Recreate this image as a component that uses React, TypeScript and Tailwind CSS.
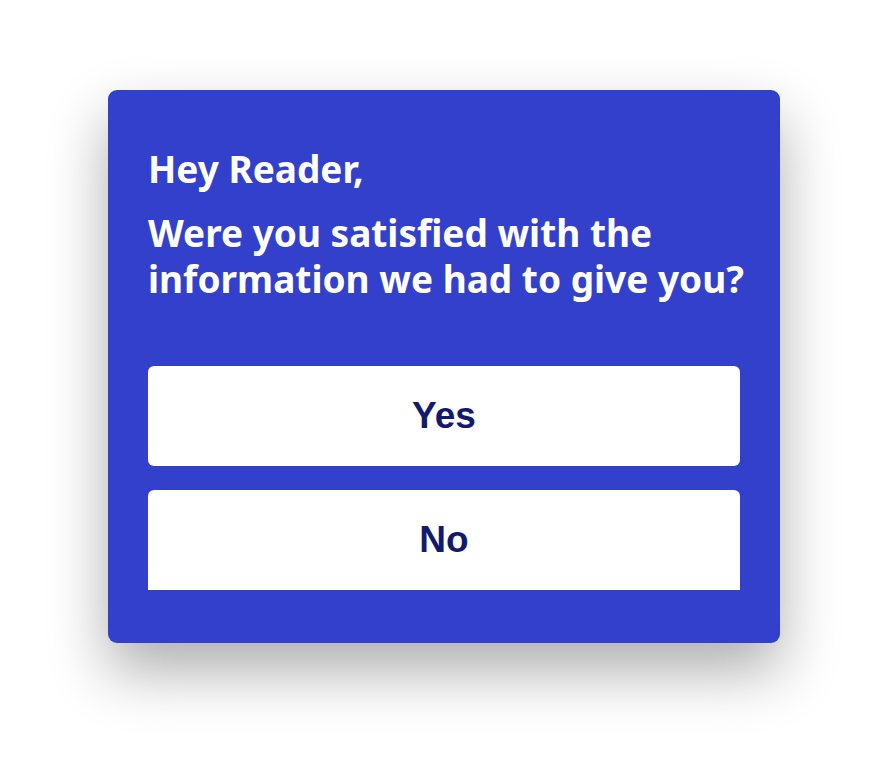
export default function App() {
  return (
    <div className="min-h-[774px] w-full bg-white flex justify-center pt-[90px]">
      <div className="w-[672px] h-[553px] rounded-[9px] bg-[#3340cc] shadow-[0_28px_60px_rgba(0,0,0,0.32)] px-10 pt-[56px]">
        <div
          className="text-white font-bold text-[37px] leading-[46px] whitespace-nowrap"
          style={{ fontFamily: '"Noto Sans", sans-serif' }}
        >
          <p>Hey Reader,</p>
          <p className="mt-[18px]">
            Were you satisfied with the
            <br />
            information we had to give you?
          </p>
        </div>
        <div
          className="mt-[64px] flex flex-col gap-6"
          style={{ fontFamily: '"Liberation Sans", Arial, sans-serif' }}
        >
          <button className="h-[100px] w-full rounded-md bg-white text-[#111a6c] text-[37px] font-bold">
            Yes
          </button>
          <button className="h-[100px] w-full rounded-t-md bg-white text-[#111a6c] text-[37px] font-bold">
            No
          </button>
        </div>
      </div>
    </div>
  );
}
